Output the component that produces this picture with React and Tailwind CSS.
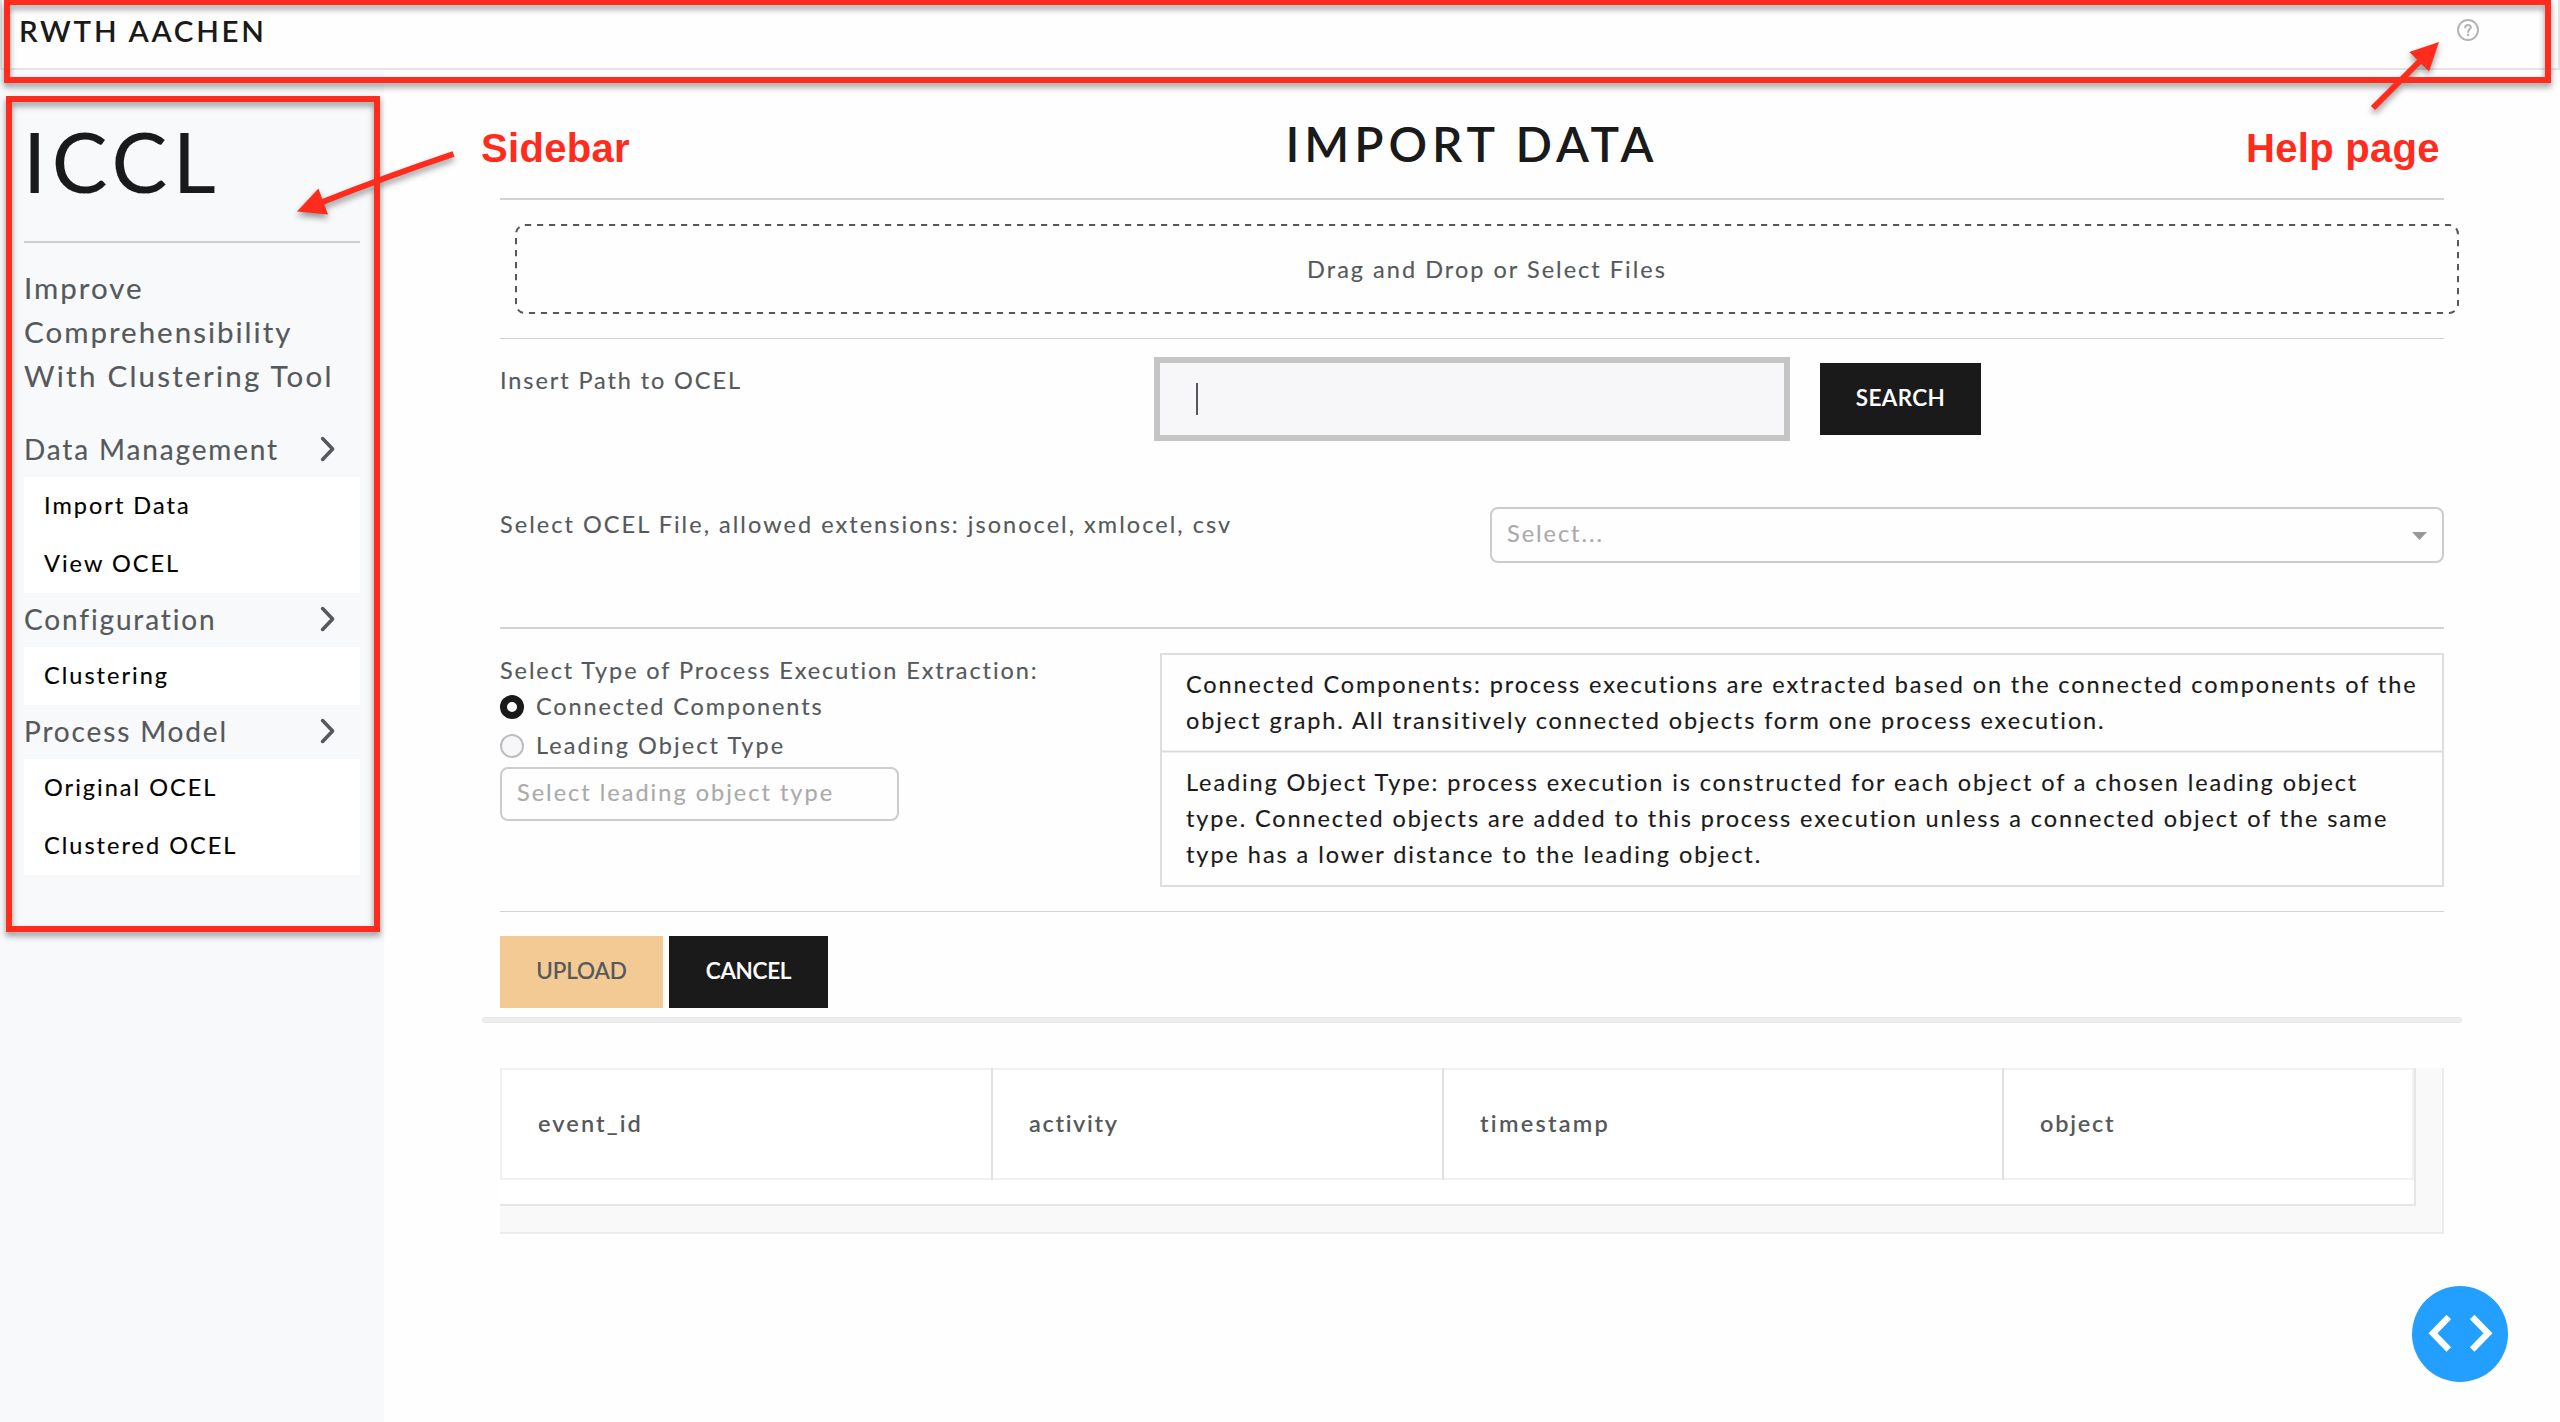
import React from "react";

const MENU = [
  { title: "Data Management", items: ["Import Data", "View OCEL"] },
  { title: "Configuration", items: ["Clustering"] },
  { title: "Process Model", items: ["Original OCEL", "Clustered OCEL"] },
];

function ChevronRight() {
  return (
    <svg width="18" height="28" viewBox="0 0 18 28" className="mr-[23px]" fill="none" stroke="#55595c" strokeWidth="3.6" strokeLinecap="round" strokeLinejoin="round">
      <path d="M3.6 3.6 L13.6 14 L3.6 24.4" />
    </svg>
  );
}

function HelpIcon() {
  return (
    <svg width="24" height="24" viewBox="0 0 24 24" fill="none" stroke="#b3b3b3" strokeLinecap="round">
      <circle cx="12" cy="12" r="10" strokeWidth="1.9" />
      <path d="M9.2 9.4 C9.2 6.2 14.9 6.3 14.8 9.4 C14.7 11.4 12.1 11.2 12.1 13.9" strokeWidth="2" />
      <circle cx="12.1" cy="17" r="0.5" strokeWidth="1.4" fill="#b3b3b3" />
    </svg>
  );
}

function Header() {
  return (
    <header className="flex h-[70px] items-start justify-between border-x-2 border-b-2 border-[#e4e4e4] pl-[17px] pr-[78px]">
      <div className="mt-[9px] text-[29.5px] leading-[44px] font-semibold tracking-[2.75px] text-[#1a1a1a] [-webkit-text-stroke:0]">RWTH AACHEN</div>
      <div className="mt-[18px]">
        <HelpIcon />
      </div>
    </header>
  );
}

function Sidebar() {
  return (
    <aside className="h-[1352px] w-[384px] shrink-0 bg-[#f8f9fb] px-6 pt-[41px] text-[#55595c]">
      <h1 className="-ml-px text-[83.5px] leading-[100px] tracking-[5.3px] text-[#1a1a1a]">ICCL</h1>
      <div className="mt-[30px] h-[2px] bg-[#cdced0]" />
      <p className="mt-[23px] text-[29.5px] leading-[44px] tracking-[2px]">
        Improve
        <br />
        Comprehensibility
        <br />
        <span className="whitespace-nowrap tracking-[2.26px]">With Clustering Tool</span>
      </p>
      <nav className="mt-[25px]">
        {MENU.map((group) => (
          <div key={group.title}>
            <div className="flex h-[54px] items-center justify-between pb-[3px] text-[28px] tracking-[1.85px]">
              <span>{group.title}</span>
              <ChevronRight />
            </div>
            {group.items.map((item) => (
              <div key={item} className="flex h-[58px] items-center bg-white pl-5 text-[23.5px] tracking-[2.02px] text-black">
                {item}
              </div>
            ))}
          </div>
        ))}
      </nav>
    </aside>
  );
}

function Radio({ checked, label, className }) {
  return (
    <div className={"flex h-6 items-center " + className}>
      {checked ? (
        <span className="size-6 rounded-full border-[7px] border-[#1a1a1a] bg-white" />
      ) : (
        <span className="size-6 rounded-full border-2 border-[#bdbdbf] bg-[#f7f7f9]" />
      )}
      <span className="pb-[2px] pl-3">{label}</span>
    </div>
  );
}

function ImportForm() {
  return (
    <main className="grow px-[116px] pt-[45px] text-[23.5px] leading-[36px] tracking-[1.97px] text-[#55595c]">
      <h2 className="text-center text-[48px] leading-[58px] font-semibold tracking-[4.94px] text-[#1a1a1a] [-webkit-text-stroke:0]">IMPORT DATA</h2>
      <div className="mt-[25px] h-[2px] bg-[#d2d2d2]" />
      <div className="relative mt-6 -mr-[15px] ml-[15px] flex h-[90px] items-center justify-center">
        <svg className="absolute inset-0" width="1944" height="90" fill="none">
          <rect x="1" y="1" width="1942" height="88" rx="9" stroke="#55595c" strokeWidth="2" strokeDasharray="6.2 5.8" />
        </svg>
        <span className="tracking-[2.02px]">Drag and Drop or Select Files</span>
      </div>
      <div className="mt-6 h-px bg-[#d2d2d2]" />

      <div className="mt-[18px] flex h-[84px] items-start">
        <div className="mt-[5px] w-[654px] tracking-[1.9px]">Insert Path to OCEL</div>
        <div className="flex h-[84px] w-[636px] items-center border-[6px] border-[#c5c5c5] bg-[#f7f7f9] pl-9">
          <span className="h-8 w-[2px] bg-[#55595c]" />
        </div>
        <div className="mt-[6px] ml-[30px] flex h-[72px] w-[161px] items-center justify-center bg-[#1a1a1a] pb-[3px] text-[22.5px] font-semibold tracking-[0.4px] text-white">
          SEARCH
        </div>
      </div>

      <div className="mt-[65px] flex h-[57px] items-start justify-between">
        <span className="tracking-[2.04px]">Select OCEL File, allowed extensions: jsonocel, xmlocel, csv</span>
        <div className="mt-px flex h-14 w-[954px] items-center justify-between rounded-lg border-2 border-[#ccc] pr-[15px] pb-[5px] pl-[15px]">
          <span className="text-[#aaa]">Select...</span>
          <svg width="15" height="8" className="mt-[6px]">
            <path d="M0 0 H15 L7.5 8 Z" fill="#999" />
          </svg>
        </div>
      </div>
      <div className="mt-16 h-[2px] bg-[#d2d2d2]" />

      <div className="mt-6 flex h-[234px] items-start justify-between">
        <div className="w-[640px]">
          <div className="-mt-px tracking-[1.9px]">Select Type of Process Execution Extraction:</div>
          <Radio checked label="Connected Components" className="mt-[7px] tracking-[1.86px]" />
          <Radio label="Leading Object Type" className="mt-[15px] tracking-[2.08px]" />
          <div className="mt-[9px] flex h-[54px] w-[399px] items-center rounded-lg border-2 border-[#ccc] pb-[4px] pl-[15px] text-[#aaa] tracking-[2.01px]">
            Select leading object type
          </div>
        </div>
        <div className="h-[234px] w-[1284px] border-2 border-[#dedede] text-[#1a1a1a] tracking-[1.885px]">
          <p className="px-6 pt-[11px] pb-3 whitespace-nowrap">
            Connected Components: process executions are extracted based on the connected components of the
            <br />
            object graph. All transitively connected objects form one process execution.
          </p>
          <div className="h-[3px] border-y border-[#efefef] bg-[#dcdcdc]" />
          <p className="px-6 pt-[11px] whitespace-nowrap">
            Leading Object Type: process execution is constructed for each object of a chosen leading object
            <br />
            type. Connected objects are added to this process execution unless a connected object of the same
            <br />
            <span className="tracking-[1.94px]">type has a lower distance to the leading object.</span>
          </p>
        </div>
      </div>
      <div className="mt-6 h-px bg-[#d2d2d2]" />

      <div className="mt-6 flex h-[72px] gap-[6px] text-[22.5px]">
        <div className="flex w-[163px] items-center justify-center bg-[#f4ca94] pb-[3px] font-medium tracking-[-0.1px]">UPLOAD</div>
        <div className="flex w-[159px] items-center justify-center bg-[#1a1a1a] pb-[3px] font-semibold tracking-[-0.3px] text-white">CANCEL</div>
      </div>
      <div className="-mx-[18px] mt-[9px] h-[6px] rounded-full border-y border-[#e6e6e6] bg-[#eee]" />

      <div className="mt-[45px] h-[166px] w-[1944px] border-r-2 border-b-2 border-[#ececec] bg-[#f9f9f9]">
        <div className="h-[138px] w-[1916px] border-r-2 border-b-2 border-[#e6e6e6] bg-white">
          <div className="flex h-[112px] border-2 border-[#f1f1f1] pb-[2px] font-semibold [-webkit-text-stroke:0]">
            <Cell className="w-[491px] border-r-2 pl-9 tracking-[2.1px]">event_id</Cell>
            <Cell className="w-[451px] border-r-2 pl-9 tracking-[1.65px]">activity</Cell>
            <Cell className="w-[560px] border-r-2 pl-9 tracking-[2.25px]">timestamp</Cell>
            <Cell className="w-[408px] pl-9 tracking-[1.75px]">object</Cell>
          </div>
        </div>
      </div>
    </main>
  );
}

function Cell({ className, children }) {
  return <div className={"-mt-[2px] -mb-1 flex h-[112px] items-center border-[#e0e0e0] pb-[2px] " + className}>{children}</div>;
}

function Annotations() {
  return (
    <div className="pointer-events-none absolute inset-0 font-['Liberation_Sans',sans-serif] text-[40px] leading-[46px] font-bold tracking-[0.3px] text-[#ff2b1c] [-webkit-text-stroke:0]">
      <svg width="2560" height="1422" className="absolute inset-0 drop-shadow-[0_4px_3px_rgba(0,0,0,0.4)]" fill="none" stroke="#ff2b1c" strokeWidth="6">
        <rect x="7" y="2" width="2541" height="78" />
        <rect x="9" y="99" width="368" height="830" />
        <path d="M453.5 154 Q385 177 320 203" />
        <path d="M297 211.5 L318.4 188.5 L328 214.5 Z" fill="#ff2b1c" stroke="none" />
        <path d="M2373 108 L2422 59" />
        <path d="M2439 42 L2409.3 52 L2429 71.6 Z" fill="#ff2b1c" stroke="none" />
      </svg>
      <span className="absolute top-[125px] left-[481px]">Sidebar</span>
      <span className="absolute top-[125px] left-[2246px] whitespace-nowrap">Help page</span>
    </div>
  );
}

function DevToolsButton() {
  return (
    <div className="absolute top-[1286px] left-[2412px] size-24 rounded-full bg-[#229fff]">
      <svg width="96" height="96" fill="none" stroke="#fff" strokeWidth="6.4">
        <path d="M36.8 31 L21 47.3 L36.8 63.5" />
        <path d="M60.2 31 L76 47.3 L60.2 63.5" />
      </svg>
    </div>
  );
}

export default function App() {
  return (
    <div className="relative h-[1422px] w-[2560px] overflow-hidden bg-[#fefefe] font-['Lato',sans-serif] [-webkit-text-stroke:0.15px]">
      <Header />
      <div className="flex">
        <Sidebar />
        <ImportForm />
      </div>
      <Annotations />
      <DevToolsButton />
    </div>
  );
}
